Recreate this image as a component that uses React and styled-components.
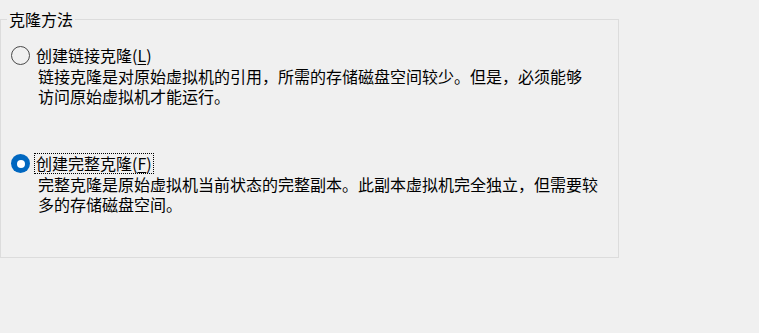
import styled, { createGlobalStyle } from "styled-components";
import { useState } from "react";

const GlobalStyle = createGlobalStyle`
  html, body {
    margin: 0;
    padding: 0;
    background: #f0f0f0;
  }
  body {
    width: 759px;
    height: 333px;
    overflow: hidden;
    font-family: "Noto Sans CJK SC", "Noto Sans", sans-serif;
    color: #000000;
  }
`;

// the dialog wraps each description in two fixed lines
const options = [
  {
    id: "linked",
    label: "创建链接克隆",
    key: "L",
    lines: [
      "链接克隆是对原始虚拟机的引用，所需的存储磁盘空间较少。但是，必须能够",
      "访问原始虚拟机才能运行。",
    ],
  },
  {
    id: "full",
    label: "创建完整克隆",
    key: "F",
    lines: [
      "完整克隆是原始虚拟机当前状态的完整副本。此副本虚拟机完全独立，但需要较",
      "多的存储磁盘空间。",
    ],
  },
];

export default function App() {
  const [selected, setSelected] = useState("full");

  return (
    <>
      <GlobalStyle />
      <Page>
        <GroupBox>
          <Legend>克隆方法</Legend>
          <Options>
            {options.map((o) => (
              <Option key={o.id} onClick={() => setSelected(o.id)}>
                <OptionRow>
                  <Radio checked={selected === o.id} />
                  <Label focused={selected === o.id}>
                    {o.label}(<u>{o.key}</u>)
                  </Label>
                </OptionRow>
                <Description>
                  {o.lines.map((l) => (
                    <Line key={l}>{l}</Line>
                  ))}
                </Description>
              </Option>
            ))}
          </Options>
        </GroupBox>
      </Page>
    </>
  );
}

const Page = styled.div`
  padding-top: 9px;
`;

const GroupBox = styled.fieldset`
  box-sizing: border-box;
  width: 619px;
  height: 249px;
  margin: 0;
  padding: 0 0 0 6px;
  border: 1px solid #dcdcdc;
  min-inline-size: 0;
`;

const Legend = styled.legend`
  padding: 0 2px;
  font-size: 16px;
  line-height: 20px;
`;

const Options = styled.div`
  display: flex;
  flex-direction: column;
  gap: 47px;
  padding: 16px 0 0 4px;
`;

const Option = styled.div`
  display: flex;
  flex-direction: column;
  cursor: default;
`;

const OptionRow = styled.div`
  display: flex;
  align-items: center;
  gap: 4px;
  height: 21px;
`;

const Radio = styled.span`
  box-sizing: border-box;
  width: 19px;
  height: 19px;
  border-radius: 50%;
  flex-shrink: 0;
  border: ${(p) => (p.checked ? "none" : "1px solid #4a4a4a")};
  background: ${(p) => (p.checked ? "#0067c0" : "transparent")};
  display: flex;
  align-items: center;
  justify-content: center;
  &::after {
    content: "";
    display: ${(p) => (p.checked ? "block" : "none")};
    width: 8px;
    height: 8px;
    border-radius: 50%;
    background: #ffffff;
  }
`;

const Label = styled.span`
  font-size: 16px;
  line-height: 19px;
  padding: 0 1px;
  border: 1px dotted ${(p) => (p.focused ? "#000000" : "transparent")};
  white-space: nowrap;
  u {
    text-underline-offset: 2px;
  }
`;

const Description = styled.div`
  display: flex;
  flex-direction: column;
  padding-left: 27px;
  font-size: 16px;
  line-height: 20px;
`;

const Line = styled.span`
  white-space: nowrap;
`;
